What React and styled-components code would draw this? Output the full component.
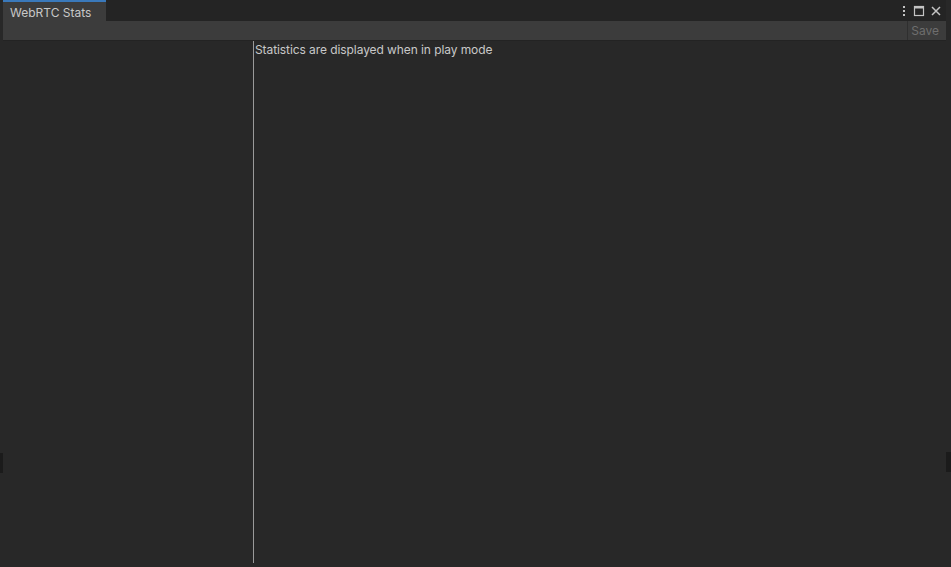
import React from "react";
import styled, { createGlobalStyle } from "styled-components";

const Global = createGlobalStyle`
  html, body {
    margin: 0;
    padding: 0;
    background: #232323;
    font-family: Inter, "Liberation Sans", sans-serif;
  }
`;

const App = () => {
  return (
    <Frame>
      <Global />
      <Edge side="left">
        <EdgeBlock top={453} />
      </Edge>
      <Window>
        <TabBar>
          <Tab>WebRTC Stats</Tab>
          <TabActions>
            <svg width="8" height="12" viewBox="0 0 8 12">
              <rect x="3" y="1" width="2" height="2" fill="#c4c4c4" />
              <rect x="3" y="5" width="2" height="2" fill="#c4c4c4" />
              <rect x="3" y="9" width="2" height="2" fill="#c4c4c4" />
            </svg>
            <svg width="12" height="12" viewBox="0 0 12 12">
              <rect x="1.5" y="1.5" width="9" height="9" fill="none" stroke="#c4c4c4" strokeWidth="1.2" />
              <rect x="1.5" y="1.5" width="9" height="2" fill="#c4c4c4" />
            </svg>
            <svg width="12" height="12" viewBox="0 0 12 12">
              <path d="M2 2 L10 10 M10 2 L2 10" stroke="#c4c4c4" strokeWidth="1.5" />
            </svg>
          </TabActions>
        </TabBar>
        <Toolbar>
          <SaveButton disabled>Save</SaveButton>
        </Toolbar>
        <Body>
          <Sidebar />
          <Divider />
          <Content>
            <Message>Statistics are displayed when in play mode</Message>
          </Content>
        </Body>
      </Window>
      <Edge side="right">
        <EdgeBlock top={452} />
      </Edge>
    </Frame>
  );
};

const Frame = styled.div`
  display: flex;
  width: 951px;
  height: 567px;
  overflow: hidden;
  background: #232323;
`;

const Edge = styled.div`
  position: relative;
  width: ${(p) => (p.side === "left" ? "3px" : "5px")};
  background: #282828;
`;

const EdgeBlock = styled.div`
  position: absolute;
  top: ${(p) => p.top}px;
  left: 0;
  right: 0;
  height: 20px;
  background: #1b1b1b;
`;

const Window = styled.div`
  flex: 1;
  display: flex;
  flex-direction: column;
  background: #282828;
`;

const TabBar = styled.div`
  display: flex;
  align-items: flex-end;
  height: 21px;
  background: #242424;
`;

const Tab = styled.div`
  width: 96px;
  height: 19px;
  padding-left: 7px;
  border-top: 2px solid #3a79bb;
  background: #3c3c3c;
  color: #c8c8c8;
  font-size: 12px;
  line-height: 21px;
  box-sizing: content-box;
  overflow: hidden;
`;

const TabActions = styled.div`
  margin-left: auto;
  align-self: center;
  display: flex;
  align-items: center;
  gap: 5px;
  padding-right: 4px;
`;

const Toolbar = styled.div`
  display: flex;
  justify-content: flex-end;
  height: 19px;
  background: #3c3c3c;
  border-bottom: 1px solid #232323;
`;

const SaveButton = styled.button`
  border: none;
  border-left: 1px solid #2f2f2f;
  background: transparent;
  color: #6e6e6e;
  font-family: Inter, "Liberation Sans", sans-serif;
  font-size: 12px;
  padding: 0 7px 0 3px;
  height: 19px;
`;

const Body = styled.div`
  flex: 1;
  display: flex;
  min-height: 0;
  padding-bottom: 4px;
`;

const Sidebar = styled.div`
  width: 250px;
  background: #282828;
`;

const Divider = styled.div`
  width: 1px;
  background: #9a9a9a;
`;

const Content = styled.div`
  flex: 1;
  padding: 1px 0 0 1px;
`;

const Message = styled.div`
  color: #c8c8c8;
  font-size: 12px;
  line-height: 16px;
  letter-spacing: -0.08px;
`;

export default App;
